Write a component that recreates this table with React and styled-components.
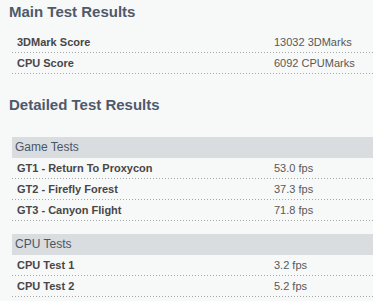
import React from "react";
import styled, { createGlobalStyle } from "styled-components";

const GlobalStyle = createGlobalStyle`
  html, body {
    margin: 0;
    padding: 0;
    background: #f7f8f8;
  }
  body {
    font-family: "Liberation Sans", Arial, sans-serif;
    overflow: hidden;
  }
`;

const Page = styled.div`
  padding: 3px 0 0 9px;
  display: flex;
  flex-direction: column;
`;

const Heading = styled.h2`
  margin: 0;
  font-size: 15px;
  line-height: 18px;
  font-weight: bold;
  color: #4e5a6b;
  margin-top: ${(p) => p.$top || 0}px;
`;

const Table = styled.div`
  margin-left: 3px;
  margin-top: ${(p) => p.$top || 0}px;
  display: flex;
  flex-direction: column;
`;

const GroupHeader = styled.div`
  height: 21px;
  line-height: 21px;
  background: #d9dde0;
  color: #4b5566;
  font-size: 12px;
  padding-left: 3px;
`;

const Row = styled.div`
  display: grid;
  grid-template-columns: 262px 1fr;
  height: 20px;
  padding-bottom: 1px;
  line-height: 20px;
  font-size: 11px;
  background-image: linear-gradient(to right, #a8a8a8 1px, transparent 1px);
  background-size: 3px 1px;
  background-repeat: repeat-x;
  background-position: left bottom;
`;

const Label = styled.div`
  padding-left: 5px;
  font-weight: bold;
  color: #474747;
`;

const Value = styled.div`
  color: #585858;
`;

const main = [
  ["3DMark Score", "13032 3DMarks"],
  ["CPU Score", "6092 CPUMarks"],
];

const groups = [
  {
    title: "Game Tests",
    rows: [
      ["GT1 - Return To Proxycon", "53.0 fps"],
      ["GT2 - Firefly Forest", "37.3 fps"],
      ["GT3 - Canyon Flight", "71.8 fps"],
    ],
  },
  {
    title: "CPU Tests",
    rows: [
      ["CPU Test 1", "3.2 fps"],
      ["CPU Test 2", "5.2 fps"],
    ],
  },
];

export default function App() {
  return (
    <>
      <GlobalStyle />
      <Page>
        <Heading>Main Test Results</Heading>
        <Table $top={11}>
          {main.map(([l, v]) => (
            <Row key={l}>
              <Label>{l}</Label>
              <Value>{v}</Value>
            </Row>
          ))}
        </Table>
        <Heading $top={22}>Detailed Test Results</Heading>
        {groups.map((g, i) => (
          <Table key={g.title} $top={i === 0 ? 23 : 13}>
            <GroupHeader>{g.title}</GroupHeader>
            {g.rows.map(([l, v]) => (
              <Row key={l}>
                <Label>{l}</Label>
                <Value>{v}</Value>
              </Row>
            ))}
          </Table>
        ))}
      </Page>
    </>
  );
}
